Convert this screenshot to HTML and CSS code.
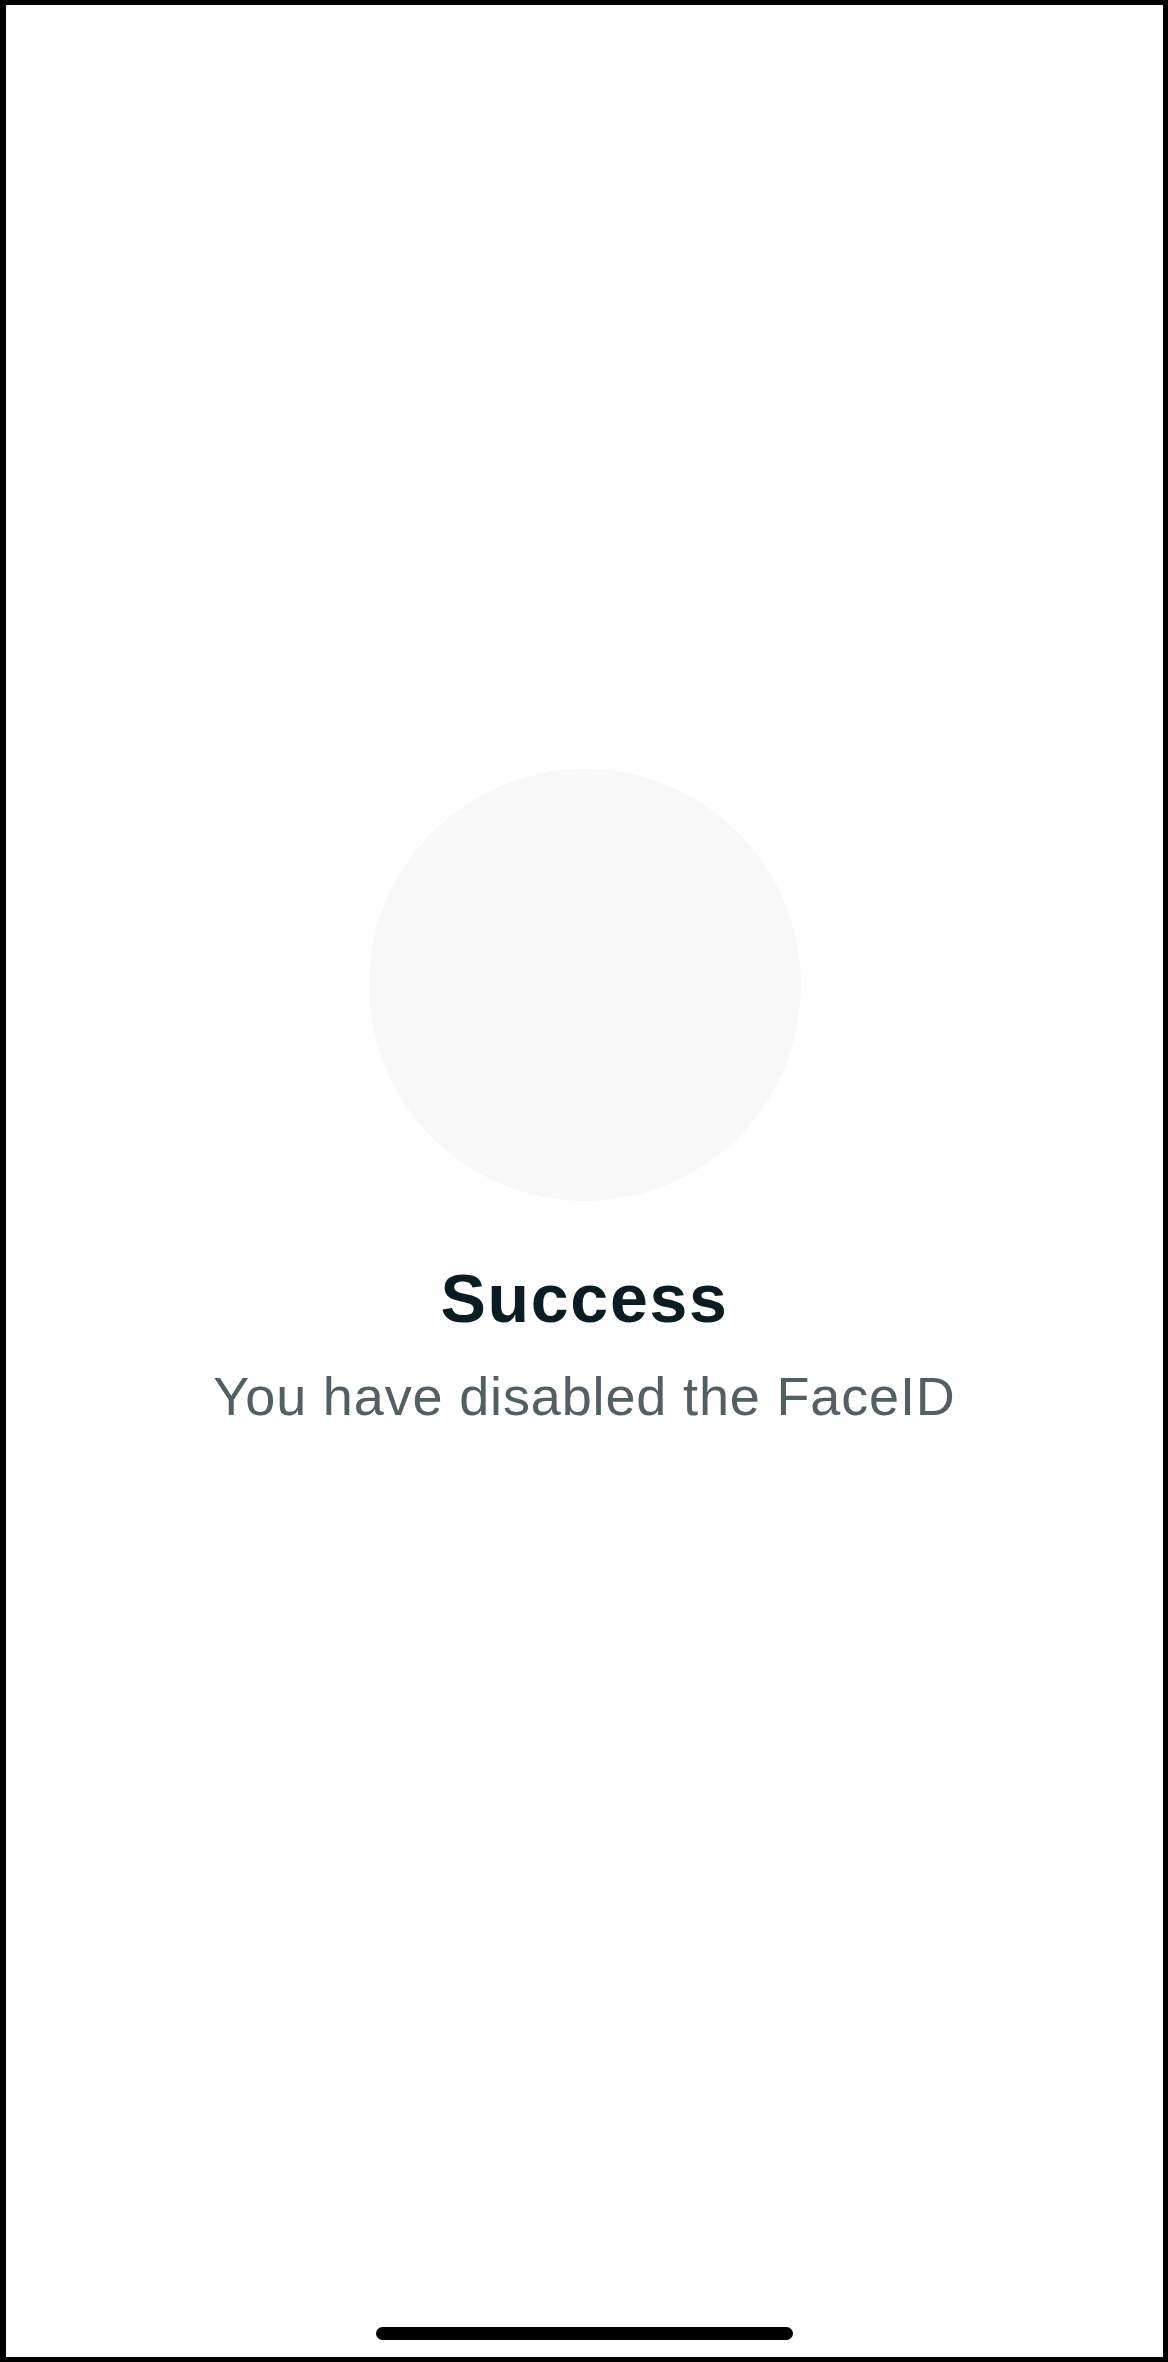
FILE: index.html
```html
<!DOCTYPE html>
<html lang="en">

<head>
    <meta charset="UTF-8">
    <meta name="viewport" content="width=device-width, initial-scale=1.0">
    <title>Success</title>
    <link rel="stylesheet" href="styles.css">
</head>

<body>
    <div class="phone">
        <section class="result">
            <div class="result-icon"></div>
            <h2 class="result-title">Success</h2>
            <p class="result-text">You have disabled the FaceID</p>
        </section>
        <div class="home-bar"></div>
    </div>
</body>

</html>
```

FILE: styles.css
```css
body {
    margin: 0;
    padding: 0;
    background: #fff;
    font-family: "Liberation Sans", Arial, sans-serif;
}

.phone {
    box-sizing: border-box;
    width: 1168px;
    height: 2362px;
    border: 5px solid #000;
    border-left-width: 6px;
    display: flex;
    flex-direction: column;
    align-items: center;
}

.result {
    padding-top: 764px;
    display: flex;
    flex-direction: column;
    align-items: center;
}

.result-icon {
    width: 432px;
    height: 432px;
    border-radius: 50%;
    background-color: #f8f8f8;
}

.result-title {
    margin: 63px 0 0;
    font-size: 68px;
    line-height: 68px;
    font-weight: 700;
    letter-spacing: 1.7px;
    color: #0b1d22;
}

.result-text {
    margin: 37px 0 0;
    font-size: 54px;
    line-height: 54px;
    letter-spacing: 0.85px;
    color: #536063;
}

.home-bar {
    margin-top: auto;
    margin-bottom: 17px;
    width: 417px;
    height: 13px;
    border-radius: 7px;
    background: #000;
}
```
